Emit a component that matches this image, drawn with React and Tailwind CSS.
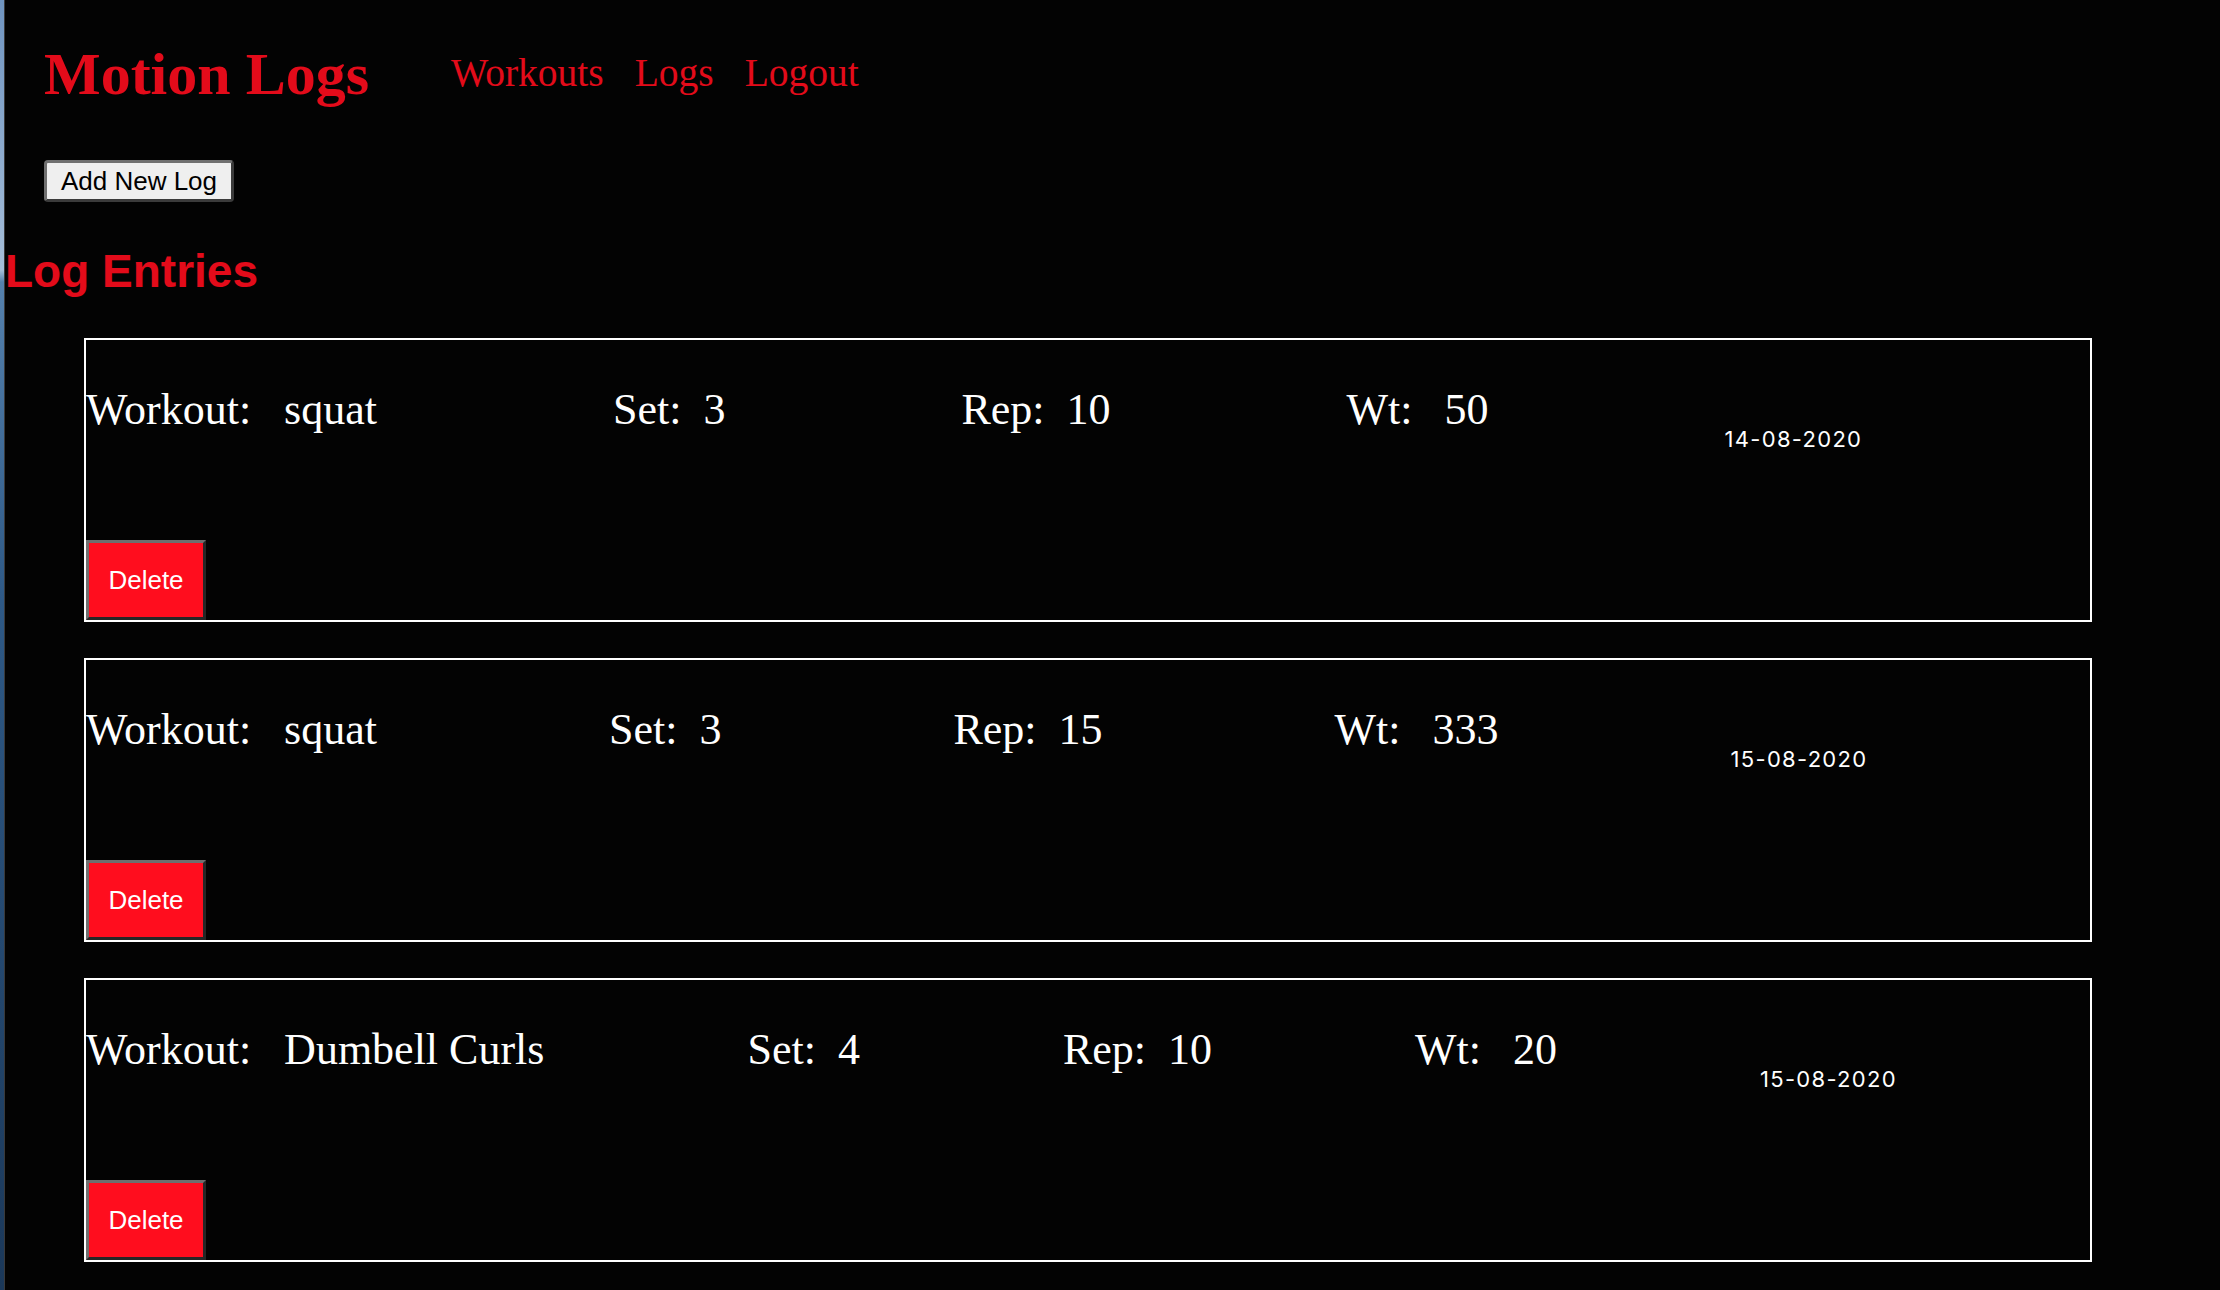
import React from 'react';

const logs = [
    { id: 1, workout: 'squat', set: 3, rep: 10, wt: 50, date: '14-08-2020', gap: 'gap-[236px]' },
    { id: 2, workout: 'squat', set: 3, rep: 15, wt: 333, date: '15-08-2020', gap: 'gap-[232px]' },
    { id: 3, workout: 'Dumbell Curls', set: 4, rep: 10, wt: 20, date: '15-08-2020', gap: 'gap-[203px]' },
];

const serif = "font-['Liberation_Serif','Times_New_Roman',serif]";
const sans = "font-['Liberation_Sans',Arial,sans-serif]";

const LogCard = ({ log }) => (
    <div className="flex h-[284px] flex-col border-2 border-white">
        <div className={`mt-[48px] flex items-start whitespace-nowrap text-white ${log.gap}`}>
            <div className={`${serif} text-[44px] leading-none`}>
                Workout:<span className="ml-[33px]">{log.workout}</span>
            </div>
            <div className={`${serif} text-[44px] leading-none`}>
                Set:<span className="ml-[22px]">{log.set}</span>
            </div>
            <div className={`${serif} text-[44px] leading-none`}>
                Rep:<span className="ml-[22px]">{log.rep}</span>
            </div>
            <div className={`${serif} text-[44px] leading-none`}>
                Wt:<span className="ml-[32px]">{log.wt}</span>
            </div>
            <div className="mt-[40px] font-['Inter',sans-serif] text-[22px] leading-none tracking-[1.3px]">
                {log.date}
            </div>
        </div>
        <button
            className={`${sans} mt-auto h-[80px] w-[120px] self-start border-[3px] border-t-[#6e6e6e] border-l-[#6e6e6e] border-b-[#262626] border-r-[#262626] bg-[#ff0d1e] text-[26px] leading-none text-white`}
        >
            Delete
        </button>
    </div>
);

const App = () => {
    return (
        <div className="flex min-h-screen bg-[#030303]">
            {/* sliver of desktop wallpaper at the window edge */}
            <div className="w-[4px] shrink-0 bg-[linear-gradient(to_bottom,#6f94c0_0px,#a6bed9_270px,#5581ad_282px,#2e5986_600px,#1b3859_1290px)]" />
            <div className="w-px shrink-0 bg-[#3a3a3a]" />

            <div className="flex-1">
                <header className="flex items-center pl-[39px] pt-[44px]">
                    <h1 className={`${serif} text-[60px] font-bold leading-none text-[#e30b1a]`}>Motion Logs</h1>
                    <nav className={`${serif} ml-[82px] flex gap-[31px] text-[39.5px] leading-none text-[#e30b1a]`}>
                        <a href="#">Workouts</a>
                        <a href="#">Logs</a>
                        <a href="#">Logout</a>
                    </nav>
                </header>

                <div className="pl-[39px] pt-[56px]">
                    <button
                        className={`${sans} h-[42px] w-[190px] rounded-[4px] border-[3px] border-t-[#707070] border-l-[#707070] border-b-[#3b3b3b] border-r-[#3b3b3b] bg-[#efefef] text-[26px] leading-none text-black`}
                    >
                        Add New Log
                    </button>
                </div>

                <h2 className={`${sans} mt-[46px] text-[46px] font-bold leading-none text-[#e30b1a]`}>Log Entries</h2>

                <div className="ml-[79px] mt-[44px] flex w-[2008px] flex-col gap-[36px] pb-[28px]">
                    {logs.map((log) => (
                        <LogCard key={log.id} log={log} />
                    ))}
                </div>
            </div>
        </div>
    );
};

export default App;
